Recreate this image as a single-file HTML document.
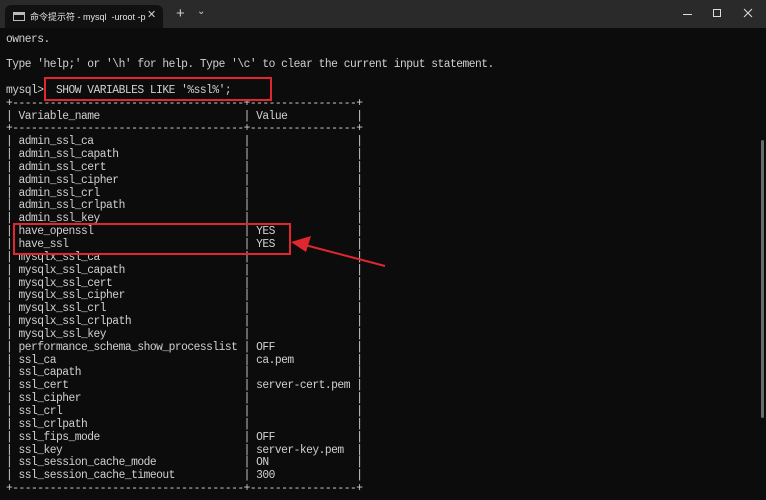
<!DOCTYPE html>
<html><head><meta charset="utf-8"><style>
html,body{margin:0;padding:0;width:766px;height:500px;overflow:hidden;background:#0c0c0c}
.title{position:absolute;left:0;top:0;width:766px;height:28px;background:#2a2a2a}
.tab{position:absolute;left:5px;top:5px;width:158px;height:23px;background:#111;border-radius:6px 6px 0 0}
.tab span{position:absolute;left:25px;top:5px;font:9px "Liberation Sans","Noto Sans CJK SC",sans-serif;color:#e6e6e6;white-space:nowrap}
.ic{position:absolute;left:8px;top:7px;width:10px;height:7px;border:1px solid #bbb}
.ic:after{content:"";position:absolute;left:0;top:0;width:10px;height:2px;background:#bbb}
.tx{position:absolute;color:#ccc;font:12px "Liberation Sans",sans-serif}
pre{position:absolute;left:6px;top:33.5px;margin:0;font:11.5px/12.85px "Liberation Mono",monospace;letter-spacing:-0.52px;color:#d0d0d0;white-space:pre;transform:scaleX(0.98);transform-origin:0 0}
.box{position:absolute;border:2px solid #e0262e}
.sb{position:absolute;left:761px;top:140px;width:3px;height:278px;background:#6a6a6a;border-radius:2px}
</style></head><body>
<div class="title"></div>
<div class="tab"><div class="ic"></div><span>命令提示符 - mysql &nbsp;-uroot -p</span></div>
<div class="tx" style="left:147px;top:8px;font-size:11px">✕</div>
<div class="tx" style="left:176px;top:5px;font-size:15px">+</div>
<div class="tx" style="left:197px;top:6px;font-size:10px">⌄</div>
<svg style="position:absolute;left:680px;top:6px" width="86" height="16"><g stroke="#ddd" stroke-width="1" fill="none"><path d="M3 8.5H12"/><path d="M33.5 3.5h7v7h-7z"/><path d="M64 3l8 8M72 3l-8 8"/></g></svg>
<pre>owners.

Type 'help;' or '\h' for help. Type '\c' to clear the current input statement.

mysql>  SHOW VARIABLES LIKE '%ssl%';
+-------------------------------------+-----------------+
| Variable_name                       | Value           |
+-------------------------------------+-----------------+
| admin_ssl_ca                        |                 |
| admin_ssl_capath                    |                 |
| admin_ssl_cert                      |                 |
| admin_ssl_cipher                    |                 |
| admin_ssl_crl                       |                 |
| admin_ssl_crlpath                   |                 |
| admin_ssl_key                       |                 |
| have_openssl                        | YES             |
| have_ssl                            | YES             |
| mysqlx_ssl_ca                       |                 |
| mysqlx_ssl_capath                   |                 |
| mysqlx_ssl_cert                     |                 |
| mysqlx_ssl_cipher                   |                 |
| mysqlx_ssl_crl                      |                 |
| mysqlx_ssl_crlpath                  |                 |
| mysqlx_ssl_key                      |                 |
| performance_schema_show_processlist | OFF             |
| ssl_ca                              | ca.pem          |
| ssl_capath                          |                 |
| ssl_cert                            | server-cert.pem |
| ssl_cipher                          |                 |
| ssl_crl                             |                 |
| ssl_crlpath                         |                 |
| ssl_fips_mode                       | OFF             |
| ssl_key                             | server-key.pem  |
| ssl_session_cache_mode              | ON              |
| ssl_session_cache_timeout           | 300             |
+-------------------------------------+-----------------+</pre>
<div class="box" style="left:44px;top:77px;width:224px;height:20px"></div>
<div class="box" style="left:13px;top:223px;width:274px;height:28px"></div>
<svg style="position:absolute;left:0;top:0" width="766" height="500"><path d="M385 266L305 245" stroke="#e0262e" stroke-width="2"/><path d="M291 242L311 236L306 252Z" fill="#e0262e"/></svg>
<div class="sb"></div>
</body></html>
